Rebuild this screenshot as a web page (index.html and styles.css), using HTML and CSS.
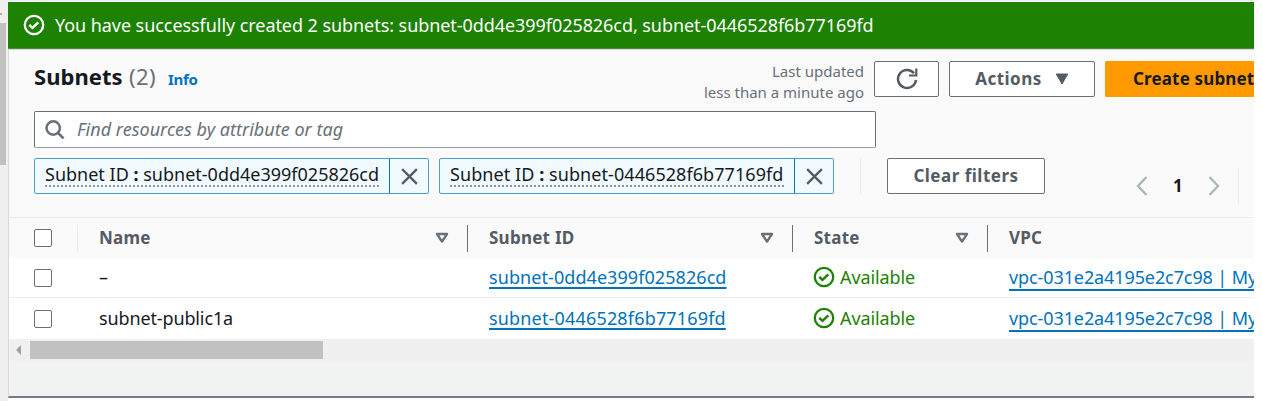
FILE: index.html
```html
<!DOCTYPE html>
<html lang="en">
<head>
<meta charset="utf-8">
<title>Subnets</title>
<link rel="stylesheet" href="styles.css">
</head>
<body>
<svg width="0" height="0" class="defs">
  <symbol id="ok" viewBox="0 0 22 22"><circle cx="11" cy="11" r="9.2" fill="none" stroke="currentColor" stroke-width="2.3"/><path d="M6.2 10.800l3.300 3 5.800-5.500" fill="none" stroke="currentColor" stroke-width="2.500"/></symbol>
  <symbol id="close" viewBox="0 0 18 18"><path d="M1.2 1.2l15.6 15.6M16.8 1.2L1.2 16.8" fill="none" stroke="currentColor" stroke-width="2.4"/></symbol>
  <symbol id="sort" viewBox="0 0 14 12"><path d="M2 2h10L7 9.600z" fill="none" stroke="currentColor" stroke-width="2.4" stroke-linejoin="round"/></symbol>
</svg>
<div class="page">
  <div class="side-scroll"><i class="side-arrow"></i><div class="side-thumb"></div></div>
  <main class="main">
    <div class="flash"><svg class="ok"><use href="#ok"/></svg><span class="flash-text">You have successfully created 2 subnets: subnet-0dd4e399f025826cd, subnet-0446528f6b77169fd</span></div>
    <section class="tools">
      <div class="head">
        <h1 class="title">Subnets</h1><span class="count">(2)</span><a class="info">Info</a>
        <div class="updated"><span class="up1">Last updated</span><span class="up2">less than a minute ago</span></div>
        <button class="btn refresh"><svg width="22" height="22" viewBox="0 0 22 22"><path d="M18 5.200A9 9 0 1 0 20 11.800" fill="none" stroke="currentColor" stroke-width="2.500"/><path d="M20.300 0.500v7h-7.300" fill="none" stroke="currentColor" stroke-width="2.200"/></svg></button>
        <button class="btn actions"><span>Actions</span><svg width="14" height="12" viewBox="0 0 14 12"><path d="M1.2 1h11.6L7 11z" fill="currentColor" stroke="currentColor" stroke-linejoin="round"/></svg></button>
        <button class="btn create">Create subnet</button>
      </div>
      <div class="search"><svg width="20" height="20" viewBox="0 0 20 20"><circle cx="8.2" cy="8" r="6.7" fill="none" stroke="currentColor" stroke-width="2.5"/><path d="M12.8 12.8l5.8 5.6" stroke="currentColor" stroke-width="2.7"/></svg><span class="placeholder">Find resources by attribute or tag</span></div>
      <div class="filters">
        <div class="token"><span class="token-text">Subnet ID <b>:</b> subnet-0dd4e399f025826cd</span><span class="token-x"><svg><use href="#close"/></svg></span></div>
        <div class="token second"><span class="token-text">Subnet ID <b>:</b> subnet-0446528f6b77169fd</span><span class="token-x"><svg><use href="#close"/></svg></span></div>
        <div class="sep"></div>
        <button class="btn clear">Clear filters</button>
        <div class="pager"><svg width="12" height="20" viewBox="0 0 12 20"><path d="M10.5 1L2 10l8.500 9" fill="none" stroke="currentColor" stroke-width="2.4"/></svg><b>1</b><svg width="12" height="20" viewBox="0 0 12 20"><path d="M1.500 1L10 10l-8.500 9" fill="none" stroke="currentColor" stroke-width="2.4"/></svg></div>
      </div>
    </section>
    <div class="grid thead">
      <div class="check"><i class="box"></i></div>
      <div class="th">Name<svg><use href="#sort"/></svg></div>
      <div class="th">Subnet ID<svg><use href="#sort"/></svg></div>
      <div class="th">State<svg><use href="#sort"/></svg></div>
      <div class="th last">VPC</div>
    </div>
    <div class="grid row first">
      <div class="check"><i class="box"></i></div>
      <div class="td">–</div>
      <div class="td"><a class="link">subnet-0dd4e399f025826cd</a></div>
      <div class="td state"><svg class="ok"><use href="#ok"/></svg>Available</div>
      <div class="td"><a class="link vpc">vpc-031e2a4195e2c7c98 | My</a></div>
    </div>
    <div class="grid row">
      <div class="check"><i class="box"></i></div>
      <div class="td name">subnet-public1a</div>
      <div class="td"><a class="link second-link">subnet-0446528f6b77169fd</a></div>
      <div class="td state"><svg class="ok"><use href="#ok"/></svg>Available</div>
      <div class="td"><a class="link vpc">vpc-031e2a4195e2c7c98 | My</a></div>
    </div>
    <div class="hscroll"><i class="h-arrow"></i><div class="h-thumb"></div></div>
    <div class="bottom"></div>
  </main>
</div>
</body>
</html>
```
FILE: styles.css
```css
* { box-sizing: border-box; }
body { margin: 0; background: #fff; color: #16191f; font: 18px/24px "Noto Sans", "Open Sans", sans-serif; overflow: hidden; }
.defs { display: block; height: 0; }
svg { flex: none; }
.page { display: flex; width: 1254px; height: 401px; overflow: hidden; }
.side-scroll { width: 8px; flex: none; background: #f0f0f0; padding-top: 13px; }
.side-arrow { display: block; width: 2px; height: 2px; background: #b0b0b0; }
.side-thumb { width: 6px; height: 142px; margin-top: 8px; background: #c1c1c1; }
.main { width: 1246px; flex: none; overflow: hidden; border-top: 1px solid #e9ebed; padding-top: 1px; }
.flash { height: 47px; background: #1d8102; color: #fff; display: flex; align-items: center; padding-left: 15px; gap: 10px; border-bottom: 1px solid #4f8a40; white-space: nowrap; letter-spacing: -0.062px; }
.flash-text { padding-bottom: 1px; }
.ok { width: 22px; height: 22px; }
.tools { height: 169px; padding: 11px 0 0 25px; background: #fafafa; border-left: 1px solid #d5dbdb; border-top: 1px solid #d5dbdb; border-bottom: 1px solid #eaeded; }
.head { display: flex; height: 36px; white-space: nowrap; }
.title { margin: 0; font-size: 22px; line-height: 31px; font-weight: 700; width: 95px; letter-spacing: 0.05px; }
.count { font-size: 22px; line-height: 31px; color: #687078; width: 39px; letter-spacing: 0.4px; }
.info { font-size: 15px; font-weight: 700; line-height: 37px; color: #0073bb; width: 60px; letter-spacing: -0.3px; }
.updated { margin-left: auto; display: flex; flex-direction: column; align-items: flex-end; font-size: 15px; line-height: 20.500px; color: #687078; margin-right: 10px; }
.btn { height: 36px; flex: none; border: 1px solid #687078; border-radius: 2px; background: #fff; color: #545b64; font: 700 17px/31px "Noto Sans", sans-serif; padding: 0 0 2px; display: flex; align-items: center; justify-content: center; white-space: nowrap; letter-spacing: 0.45px; }
.refresh { width: 65px; margin-right: 10px; padding-bottom: 0; }
.actions { width: 146px; gap: 13px; margin-right: 10px; }
.actions svg { margin-top: 2px; }
.create { width: 149px; justify-content: flex-start; padding-left: 27px; background: #ff9900; border-color: #ff9900; color: #16191f; border-right: 0; border-radius: 2px 0 0 2px; letter-spacing: 0.15px; }
.search { margin-top: 14px; width: 842px; height: 37px; border: 1px solid #687078; border-bottom-color: #9aa1a8; border-radius: 2px; background: #fff; display: flex; align-items: center; padding-left: 10px; gap: 12px; color: #687078; white-space: nowrap; }
.placeholder { font-style: italic; line-height: 34px; padding-bottom: 2px; letter-spacing: 0.02px; }
.filters { display: flex; margin-top: 10px; height: 36px; white-space: nowrap; }
.token { width: 395px; height: 36px; display: flex; border: 1px solid #4a9fd0; border-radius: 2px; background: #f1faff; padding-left: 10px; align-items: flex-start; }
.second { margin-left: 10px; }
.token-text { width: 334px; height: 28px; line-height: 31px; border-bottom: 2px dotted #8d959c; }
.second .token-text { letter-spacing: 0.07px; }
.token-x { margin-left: auto; width: 39px; height: 34px; border-left: 1px solid #0073bb; display: flex; align-items: center; justify-content: center; color: #545b64; }
.token-x svg { width: 17px; height: 17px; }
.sep { width: 1px; background: #eaeded; margin: 0 26px; }
.clear { width: 158px; letter-spacing: 0.5px; }
.pager { display: flex; align-items: center; gap: 25px; height: 36px; margin: 10px 0 0 91px; width: 103px; border-right: 1px solid #eaeded; color: #aab7b8; }
.pager b { color: #16191f; font-size: 17px; width: 10px; margin-top: -1px; }
.grid { display: grid; grid-template-columns: 69px 390px 325px 195px 266px; align-items: center; border-left: 1px solid #d5dbdb; white-space: nowrap; }
.thead { height: 40px; background: #fafafa; color: #545b64; font-weight: 700; font-size: 17px; letter-spacing: 0.25px; }
.check { padding-left: 25px; }
.thead .check { border-right: 1px solid #eaeded; height: 26px; display: flex; align-items: center; }
.box { display: block; width: 18px; height: 18px; border: 1.500px solid #687078; border-radius: 2px; background: #fff; }
.th { height: 27px; line-height: 25px; border-right: 1px solid #687078; display: flex; justify-content: space-between; align-items: center; padding: 0 18px 1px 21px; }
.th svg { width: 14px; height: 12px; color: #687078; }
.last { border: 0; }
.td { padding: 0 0 2px 21px; line-height: 24px; }
.row { height: 41px; background: #fff; }
.first { height: 40px; border-bottom: 1px solid #eaeded; }
.name { letter-spacing: -0.13px; }
.state { display: flex; align-items: center; gap: 5px; color: #1d8102; letter-spacing: -0.1px; padding-left: 20px; }
.link { color: #0073bb; text-decoration: underline; text-decoration-thickness: 1.500px; text-underline-offset: 3px; text-decoration-skip-ink: none; letter-spacing: 0.07px; }
.second-link { letter-spacing: 0.17px; }
.vpc { text-underline-offset: 5px; letter-spacing: -0.1px; }
.hscroll { height: 22px; background: #f0f0f0; display: flex; align-items: center; padding-left: 7px; border-left: 1px solid #d5dbdb; }
.h-arrow { border: 5px solid transparent; border-left: 0; border-right-color: #a0a0a0; }
.h-thumb { width: 293px; height: 18px; background: #c1c1c1; margin-left: 9px; }
.bottom { height: 37px; background: #f1f3f3; border-left: 1px solid #d5dbdb; border-bottom: 2px solid #737b88; }
```
